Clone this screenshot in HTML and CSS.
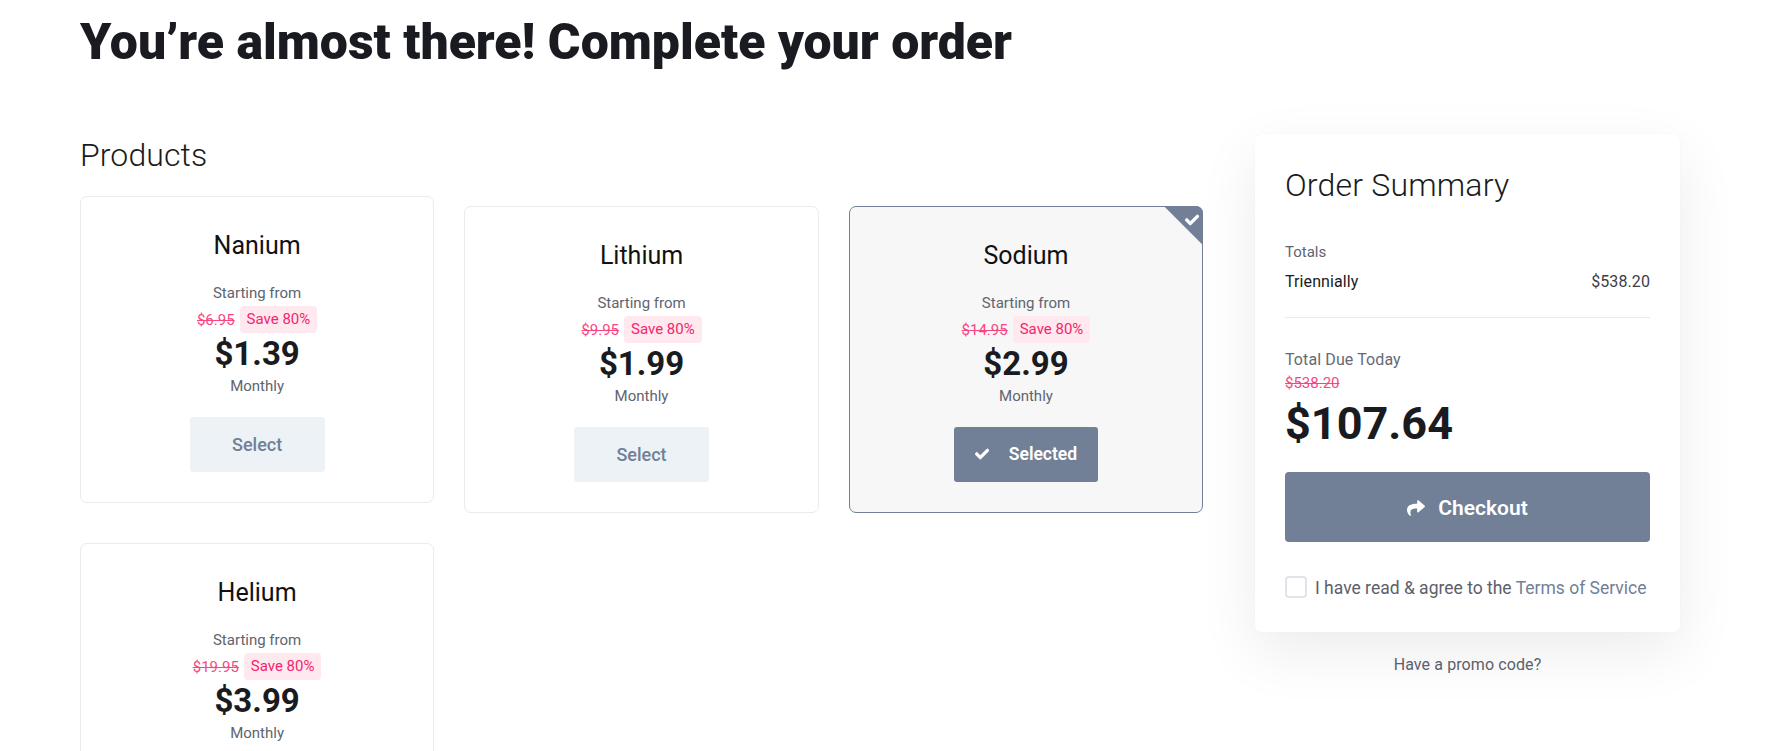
FILE: index.html
```html
<!DOCTYPE html>
<html lang="en">
<head>
<meta charset="utf-8">
<title>Complete your order</title>
<link rel="stylesheet" href="styles.css">
</head>
<body>
<main class="page">
  <h1 class="title">You’re almost there! Complete your order</h1>
  <div class="layout">
    <section class="products">
      <h2 class="section-title">Products</h2>
      <div class="grid">
        <article class="card">
          <h3 class="name">Nanium</h3>
          <div class="from">Starting from</div>
          <div class="deal"><s class="old">$6.95</s><span class="save">Save 80%</span></div>
          <div class="price">$1.39</div>
          <div class="cycle">Monthly</div>
          <button class="btn-select" type="button">Select</button>
        </article>
        <article class="card shifted">
          <h3 class="name">Lithium</h3>
          <div class="from">Starting from</div>
          <div class="deal"><s class="old">$9.95</s><span class="save">Save 80%</span></div>
          <div class="price">$1.99</div>
          <div class="cycle">Monthly</div>
          <button class="btn-select" type="button">Select</button>
        </article>
        <article class="card shifted selected">
          <span class="corner"></span>
          <svg class="corner-check" viewBox="0 0 512 512"><path d="M173.898 439.404l-166.4-166.4c-9.997-9.997-9.997-26.206 0-36.204l36.203-36.204c9.997-9.998 26.207-9.998 36.204 0L192 312.69 432.095 72.596c9.997-9.997 26.207-9.997 36.204 0l36.203 36.204c9.997 9.997 9.997 26.206 0 36.204l-294.4 294.401c-9.998 9.997-26.207 9.997-36.204-.001z"/></svg>
          <h3 class="name">Sodium</h3>
          <div class="from">Starting from</div>
          <div class="deal"><s class="old">$14.95</s><span class="save">Save 80%</span></div>
          <div class="price">$2.99</div>
          <div class="cycle">Monthly</div>
          <button class="btn-selected" type="button"><svg class="icon-check" viewBox="0 0 512 512"><path d="M173.898 439.404l-166.4-166.4c-9.997-9.997-9.997-26.206 0-36.204l36.203-36.204c9.997-9.998 26.207-9.998 36.204 0L192 312.69 432.095 72.596c9.997-9.997 26.207-9.997 36.204 0l36.203 36.204c9.997 9.997 9.997 26.206 0 36.204l-294.4 294.401c-9.998 9.997-26.207 9.997-36.204-.001z"/></svg>Selected</button>
        </article>
        <article class="card">
          <h3 class="name">Helium</h3>
          <div class="from">Starting from</div>
          <div class="deal"><s class="old">$19.95</s><span class="save">Save 80%</span></div>
          <div class="price">$3.99</div>
          <div class="cycle">Monthly</div>
          <button class="btn-select" type="button">Select</button>
        </article>
      </div>
    </section>
    <aside class="side">
      <div class="summary">
        <h2 class="summary-title">Order Summary</h2>
        <div class="totals-label">Totals</div>
        <div class="line"><span class="line-name">Triennially</span><span class="line-value">$538.20</span></div>
        <div class="due-label">Total Due Today</div>
        <s class="due-old">$538.20</s>
        <div class="due-price">$107.64</div>
        <button class="btn-checkout" type="button"><svg class="icon-share" viewBox="0 0 512 512"><path d="M503.691 189.836L327.687 37.851C312.281 24.546 288 35.347 288 56.015v80.053C127.371 137.907 0 170.1 0 322.326c0 61.441 39.581 122.309 83.333 154.132 13.653 9.931 33.111-2.533 28.077-18.631C66.066 312.814 132.917 274.316 288 272.085V360c0 20.7 24.3 31.453 39.687 18.164l176.004-152c11.071-9.562 11.086-26.753 0-36.328z"/></svg>Checkout</button>
        <label class="agree"><span class="checkbox"></span><span class="agree-text">I have read &amp; agree to the <a class="terms" href="#">Terms of Service</a></span></label>
      </div>
      <a class="promo" href="#">Have a promo code?</a>
    </aside>
  </div>
</main>
</body>
</html>
```
FILE: styles.css
```css
* { box-sizing: border-box; }
html, body { margin: 0; height: 751px; overflow: hidden; }
body { background: #fff; font-family: Roboto, "Liberation Sans", sans-serif; color: #1a1a1f; }
.page { padding: 0 88px 0 80px; }
.title { margin: 0; padding-top: 12px; font-size: 50px; line-height: 60px; font-weight: 900; color: #1a1b20; }
.layout { display: flex; justify-content: space-between; align-items: flex-start; margin-top: 62px; }
.products { width: 1124px; padding-top: .5px; }
.section-title { margin: 0 0 21.8px; font-size: 32px; line-height: 40px; font-weight: 300; letter-spacing: .1px; color: #1a1b20; }
.grid { display: grid; grid-template-columns: repeat(3, 354.2px); column-gap: 30.25px; row-gap: 30.6px; align-items: start; }
.card { position: relative; height: 306.4px; padding: 31px 0 30px; border: 1px solid #ebebee; border-radius: 7px; display: flex; flex-direction: column; align-items: center; text-align: center; background: #fff; }
.shifted { margin-top: 10px; }
.selected { background: #f7f7f7; border-color: #718096; }
.name { margin: 0; font-size: 25px; line-height: 36px; font-weight: 400; color: #111; }
.from { margin-top: 19px; font-size: 15px; line-height: 21px; color: #60646f; }
.deal { display: flex; align-items: center; gap: 5px; height: 27px; margin-top: 2px; font-size: 15px; }
.old { color: #f8266e; opacity: .85; }
.save { padding: 0 7px; line-height: 27px; border-radius: 4px; background: #ffe8ee; color: #f5246e; }
.price { font-size: 33px; line-height: 42px; font-weight: 700; color: #1a1b20; }
.cycle { margin-top: 1px; font-size: 15px; line-height: 21px; color: #60646f; }
.btn-select, .btn-selected { display: flex; align-items: center; justify-content: center; height: 55px; margin-top: 20px; border: 0; border-radius: 3px; font-family: inherit; font-size: 18px; font-weight: 500; cursor: pointer; }
.btn-select { width: 135px; background: #edf2f7; color: #718096; }
.btn-selected { width: 144px; background: #718096; color: #fff; font-size: 17.5px; font-weight: 600; }
.icon-check { width: 14px; height: 14px; margin-right: 20px; fill: #fff; stroke: #fff; stroke-width: 24px; }
.corner { position: absolute; top: -1px; right: -1px; width: 39px; height: 39px; border-top-right-radius: 7px; background: #718096; clip-path: polygon(0 0, 100% 0, 100% 100%); }
.corner-check { position: absolute; top: 6px; right: 3px; width: 14px; height: 14px; fill: #fff; stroke: #fff; stroke-width: 24px; }
.side { width: 425px; }
.summary { padding: 30px 30px 33px; background: #fff; border-radius: 6px; box-shadow: 0 0 1px rgba(0,0,0,.08), 0 20px 60px rgba(0,0,0,.08); }
.summary-title { margin: 0; font-size: 32px; line-height: 42px; font-weight: 300; letter-spacing: .2px; color: #1a1b20; }
.totals-label { margin-top: 36px; font-size: 15px; line-height: 20px; color: #60646f; }
.line { display: flex; justify-content: space-between; margin-top: 8px; padding-bottom: 23px; border-bottom: 1px solid #e8eaee; font-size: 16px; line-height: 24px; letter-spacing: .1px; }
.line-name { color: #1a1b20; }
.line-value { color: #3c3e45; }
.due-label { margin-top: 30px; font-size: 16px; line-height: 24px; letter-spacing: .1px; color: #666a75; }
.due-old { display: block; margin-top: 1px; font-size: 15px; line-height: 20px; color: #f8266e; opacity: .85; }
.due-price { font-size: 45px; line-height: 62px; font-weight: 700; color: #1a1b20; }
.btn-checkout { display: flex; align-items: center; justify-content: center; width: 100%; height: 70px; margin-top: 17px; padding: 1px 0 0; border: 0; border-radius: 4px; background: #718096; color: #fff; font-family: inherit; font-size: 21px; font-weight: 600; cursor: pointer; }
.icon-share { width: 18px; height: 18px; margin-right: 13px; fill: #fff; }
.agree { display: flex; align-items: center; gap: 8px; margin-top: 33px; font-size: 17.5px; line-height: 22px; white-space: nowrap; color: #5c606b; }
.agree-text { padding-top: 2px; }
.checkbox { width: 22px; height: 22px; flex: none; border: 2px solid #e2e4ec; border-radius: 4px; background: #fff; }
.terms { color: #718096; text-decoration: none; }
.promo { display: block; margin-top: 21px; text-align: center; font-size: 16px; line-height: 24px; letter-spacing: .1px; color: #5c606b; text-decoration: none; }
```
